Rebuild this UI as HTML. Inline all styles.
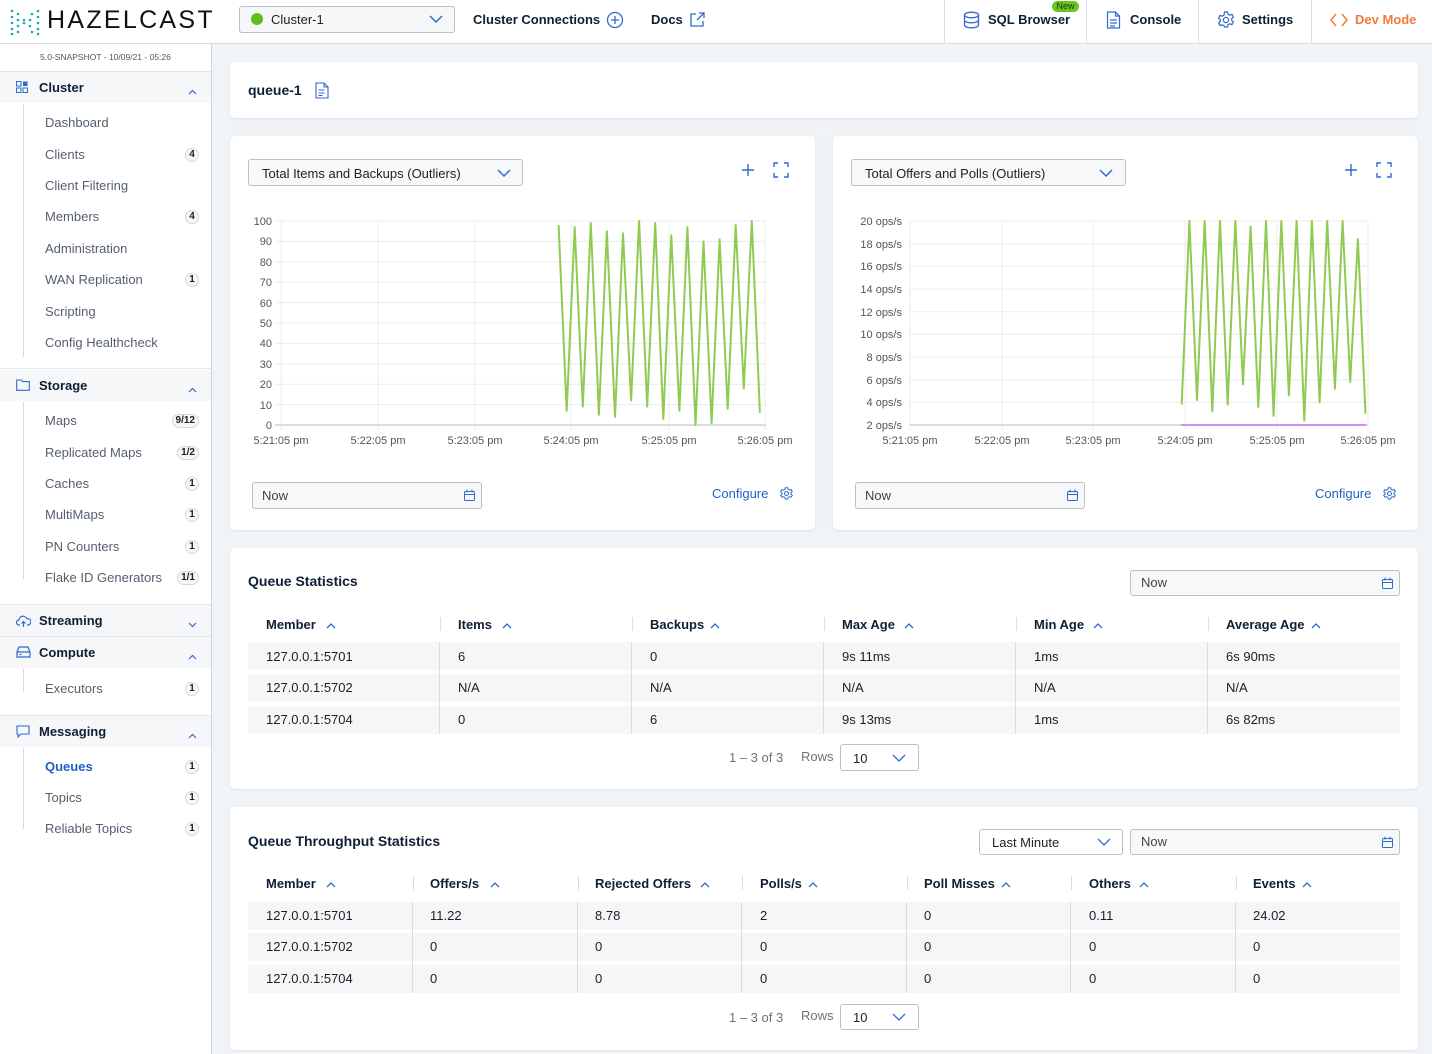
<!DOCTYPE html>
<html><head><meta charset="utf-8">
<style>
*{box-sizing:border-box;margin:0;padding:0}
body{width:1432px;height:1054px;overflow:hidden;background:#f1f4f7;font-family:"Liberation Sans",sans-serif;font-size:13px;color:#0f1f35;position:relative}
.a{position:absolute;white-space:nowrap}
.hdr{left:0;top:0;width:1432px;height:44px;background:#fff;border-bottom:1px solid #d9dde2}
.side{left:0;top:44px;width:212px;height:1010px;background:#fff;border-right:1px solid #cfd4da}
.card{background:#fff;border-radius:5px;box-shadow:0 1px 2px rgba(0,0,0,.08)}
.b{font-weight:bold}
.sec{left:0;width:211px;height:31px;background:#f6f7f9;font-weight:bold;font-size:13px;color:#0f1f35}
.sec span{position:absolute;left:39px;top:8px}
.sec i{position:absolute;left:16px;top:9px}
.sec em{position:absolute;right:14px;top:11px}
.it{left:45px;color:#545f6e;font-size:13px}
.bd{position:absolute;right:0;height:14px;min-width:14px;padding:0 3px;border:1px solid #d4d7db;border-radius:8px;font-size:10px;font-weight:bold;text-align:center;line-height:12px;color:#222;background:#f7f7f7}
.tl{left:23px;width:1px;background:#d6d9dd}
.sel{border:1px solid #b9c0c9;border-radius:3px;background:#f7f8fa;color:#222}
.th{font-weight:bold;color:#0f1f35}
.row{background:#f5f6f7;height:28px}
.td{color:#1b1f24}
.vd{width:1px;background:#d9dde1}
.gray{color:#6a737d}
</style></head><body>

<div class="a hdr"></div>
<svg class="a" style="left:10px;top:8px" width="30" height="28" viewBox="0 0 30 28">
<g fill="#27a5b8">
<circle cx="2" cy="3" r="1.3"/><circle cx="2" cy="9" r="1.3"/><circle cx="2" cy="15" r="1.3"/><circle cx="2" cy="21" r="1.3"/><circle cx="2" cy="26" r="1.3"/>
<circle cx="8" cy="6" r="1.3"/><circle cx="8" cy="12" r="1.3"/><circle cx="8" cy="18" r="1.3"/><circle cx="8" cy="24" r="1.3"/>
<circle cx="14" cy="12" r="1.3"/><circle cx="14" cy="15" r="1.3"/><circle cx="20" cy="12" r="1.3"/><circle cx="20" cy="18" r="1.3"/>
<circle cx="22" cy="6" r="1.3"/><circle cx="22" cy="24" r="1.3"/>
<circle cx="28" cy="3" r="1.3"/><circle cx="28" cy="9" r="1.3"/><circle cx="28" cy="15" r="1.3"/><circle cx="28" cy="21" r="1.3"/><circle cx="28" cy="26" r="1.3"/>
</g></svg>
<div class="a" style="left:47px;top:6px;font-size:25px;letter-spacing:2.3px;color:#111">HAZELCAST</div>
<div class="a sel" style="left:239px;top:6px;width:216px;height:27px;background:#f6f7f9"></div>
<div class="a" style="left:251px;top:13px;width:12px;height:12px;border-radius:6px;background:#5fbf1a"></div>
<div class="a" style="left:271px;top:12px;font-size:13px;color:#222">Cluster-1</div>
<svg class="a" style="left:429px;top:14px" width="14" height="10"><path d="M1 2 L7 8 L13 2" stroke="#2f6ad0" stroke-width="1.5" fill="none"/></svg>
<div class="a b" style="left:473px;top:12px;font-size:13px">Cluster Connections</div>
<svg class="a" style="left:606px;top:11px" width="18" height="18"><circle cx="9" cy="9" r="7.5" stroke="#2f6ad0" stroke-width="1.3" fill="none"/><path d="M9 5v8M5 9h8" stroke="#2f6ad0" stroke-width="1.3"/></svg>
<div class="a b" style="left:651px;top:12px;font-size:13px">Docs</div>
<svg class="a" style="left:689px;top:11px" width="17" height="17"><path d="M7 3H2v12h12v-5M10 2h5v5M15 2L8 9" stroke="#2f6ad0" stroke-width="1.3" fill="none"/></svg>
<div class="a vd" style="left:944px;top:0;height:43px"></div>
<div class="a vd" style="left:1086px;top:0;height:43px"></div>
<div class="a vd" style="left:1198px;top:0;height:43px"></div>
<div class="a vd" style="left:1311px;top:0;height:43px"></div>
<svg class="a" style="left:963px;top:11px" width="17" height="18"><ellipse cx="8.5" cy="4" rx="7" ry="2.8" stroke="#2f6ad0" stroke-width="1.3" fill="none"/><path d="M1.5 4v10c0 1.6 3 2.8 7 2.8s7-1.2 7-2.8V4M1.5 9c0 1.6 3 2.8 7 2.8s7-1.2 7-2.8" stroke="#2f6ad0" stroke-width="1.3" fill="none"/></svg>
<div class="a b" style="left:988px;top:12px;font-size:13px">SQL Browser</div>
<div class="a" style="left:1052px;top:1px;width:27px;height:11px;background:#6cc51d;border-radius:6px;font-size:9px;color:#1d3a10;text-align:center;line-height:11px">New</div>
<svg class="a" style="left:1106px;top:11px" width="15" height="18"><path d="M1.5 1h8l4 4v12h-12z M9.5 1v4h4 M4 9h7M4 12h7M4 15h5" stroke="#2f6ad0" stroke-width="1.2" fill="none"/></svg>
<div class="a b" style="left:1130px;top:12px;font-size:13px">Console</div>
<svg class="a" style="left:1217px;top:11px" width="18" height="18"><circle cx="9" cy="9" r="2.6" stroke="#2f6ad0" stroke-width="1.2" fill="none"/><path d="M7.5 1h3l.5 2.2 1.8 1 2.1-.8 1.5 2.6-1.7 1.5v2l1.7 1.5-1.5 2.6-2.1-.8-1.8 1-.5 2.2h-3L7 14.8l-1.8-1-2.1.8-1.5-2.6L3.3 10.5v-2L1.6 7l1.5-2.6 2.1.8 1.8-1z" stroke="#2f6ad0" stroke-width="1.2" fill="none"/></svg>
<div class="a b" style="left:1242px;top:12px;font-size:13px">Settings</div>
<svg class="a" style="left:1330px;top:13px" width="18" height="14"><path d="M6 1L1 7l5 6M12 1l5 6-5 6" stroke="#f07b3a" stroke-width="1.5" fill="none"/></svg>
<div class="a b" style="left:1355px;top:12px;font-size:13px;color:#f07b3a">Dev Mode</div>

<div class="a side"></div>
<div class="a" style="left:0;top:52px;width:211px;text-align:center;font-size:8.5px;color:#555">5.0-SNAPSHOT - 10/09/21 - 05:26</div>
<div class="a" style="left:0;top:71px;width:211px;height:1px;background:#e2e5e8"></div>

<div class="a sec" style="top:72px"><i><svg width="12" height="12"><rect x="0.5" y="0.5" width="4.5" height="4.5" fill="none" stroke="#2f6ad0"/><rect x="7" y="0.5" width="4.5" height="4.5" fill="#2f6ad0"/><rect x="0.5" y="7" width="4.5" height="4.5" fill="none" stroke="#2f6ad0"/><rect x="7" y="7" width="4.5" height="4.5" fill="none" stroke="#2f6ad0"/></svg></i><span>Cluster</span><em><svg width="9" height="6"><path d="M1 5l3.5-3.5L8 5" stroke="#2f6ad0" fill="none" stroke-width="1.2"/></svg></em></div>
<div class="a tl" style="top:104px;height:253px"></div>
<div class="a it" style="top:115px">Dashboard</div>
<div class="a it" style="top:147px;width:154px">Clients<span class="bd" style="top:1px">4</span></div>
<div class="a it" style="top:178px">Client Filtering</div>
<div class="a it" style="top:209px;width:154px">Members<span class="bd" style="top:1px">4</span></div>
<div class="a it" style="top:241px">Administration</div>
<div class="a it" style="top:272px;width:154px">WAN Replication<span class="bd" style="top:1px">1</span></div>
<div class="a it" style="top:304px">Scripting</div>
<div class="a it" style="top:335px">Config Healthcheck</div>
<div class="a" style="left:0;top:368px;width:211px;height:1px;background:#e2e5e8"></div>

<div class="a sec" style="top:370px"><i><svg width="14" height="12"><path d="M0.7 1h4.5l1.3 1.6h6.8v8.7H0.7z" fill="none" stroke="#2f6ad0" stroke-width="1.1"/></svg></i><span>Storage</span><em><svg width="9" height="6"><path d="M1 5l3.5-3.5L8 5" stroke="#2f6ad0" fill="none" stroke-width="1.2"/></svg></em></div>
<div class="a tl" style="top:402px;height:177px"></div>
<div class="a it" style="top:413px;width:154px">Maps<span class="bd" style="top:1px">9/12</span></div>
<div class="a it" style="top:445px;width:154px">Replicated Maps<span class="bd" style="top:1px">1/2</span></div>
<div class="a it" style="top:476px;width:154px">Caches<span class="bd" style="top:1px">1</span></div>
<div class="a it" style="top:507px;width:154px">MultiMaps<span class="bd" style="top:1px">1</span></div>
<div class="a it" style="top:539px;width:154px">PN Counters<span class="bd" style="top:1px">1</span></div>
<div class="a it" style="top:570px;width:154px">Flake ID Generators<span class="bd" style="top:1px">1/1</span></div>
<div class="a" style="left:0;top:604px;width:211px;height:1px;background:#e2e5e8"></div>

<div class="a sec" style="top:605px"><i><svg width="15" height="14"><path d="M4 11H3a2.5 2.5 0 0 1 0-5 4 4 0 0 1 7.7-1.3A3 3 0 0 1 12.5 11H11M7.5 13V7.5M5.5 9.5l2-2 2 2" fill="none" stroke="#2f6ad0" stroke-width="1.2"/></svg></i><span>Streaming</span><em><svg width="9" height="6"><path d="M1 1l3.5 3.5L8 1" stroke="#2f6ad0" fill="none" stroke-width="1.2"/></svg></em></div>
<div class="a" style="left:0;top:636px;width:211px;height:1px;background:#e2e5e8"></div>
<div class="a sec" style="top:637px"><i><svg width="15" height="12"><path d="M1 6l2-5h9l2 5v5H1z M1 6h13 M3.5 8.5h2" fill="none" stroke="#2f6ad0" stroke-width="1.2"/></svg></i><span>Compute</span><em><svg width="9" height="6"><path d="M1 5l3.5-3.5L8 5" stroke="#2f6ad0" fill="none" stroke-width="1.2"/></svg></em></div>
<div class="a tl" style="top:669px;height:23px"></div>
<div class="a it" style="top:681px;width:154px">Executors<span class="bd" style="top:1px">1</span></div>
<div class="a" style="left:0;top:715px;width:211px;height:1px;background:#e2e5e8"></div>

<div class="a sec" style="top:716px"><i><svg width="14" height="13"><path d="M1 1h12v8H5l-3 3V9H1z" fill="none" stroke="#2f6ad0" stroke-width="1.1"/></svg></i><span>Messaging</span><em><svg width="9" height="6"><path d="M1 5l3.5-3.5L8 5" stroke="#2f6ad0" fill="none" stroke-width="1.2"/></svg></em></div>
<div class="a tl" style="top:748px;height:81px"></div>
<div class="a it b" style="top:759px;width:154px;color:#2160c4">Queues<span class="bd" style="top:1px">1</span></div>
<div class="a it" style="top:790px;width:154px">Topics<span class="bd" style="top:1px">1</span></div>
<div class="a it" style="top:821px;width:154px">Reliable Topics<span class="bd" style="top:1px">1</span></div>

<div class="a card" style="left:230px;top:62px;width:1188px;height:56px"></div>
<div class="a b" style="left:248px;top:82px;font-size:14px">queue-1</div>
<svg class="a" style="left:315px;top:82px" width="14" height="17"><path d="M1 1h8l4 4v11H1z M9 1v4h4 M3.5 8h6M3.5 11h6M3.5 13.5h4" stroke="#2f6ad0" stroke-width="1.1" fill="none"/></svg>

<div class="a card" style="left:230px;top:136px;width:585px;height:394px"></div>
<div class="a card" style="left:833px;top:136px;width:585px;height:394px"></div>

<div class="a sel" style="left:248px;top:159px;width:275px;height:27px"></div>
<div class="a" style="left:262px;top:166px;color:#222">Total Items and Backups (Outliers)</div>
<svg class="a" style="left:497px;top:168px" width="14" height="10"><path d="M1 2L7 8 13 2" stroke="#2f6ad0" stroke-width="1.5" fill="none"/></svg>
<div class="a sel" style="left:851px;top:159px;width:275px;height:27px"></div>
<div class="a" style="left:865px;top:166px;color:#222">Total Offers and Polls (Outliers)</div>
<svg class="a" style="left:1099px;top:168px" width="14" height="10"><path d="M1 2L7 8 13 2" stroke="#2f6ad0" stroke-width="1.5" fill="none"/></svg>

<div class="a sel" style="left:252px;top:482px;width:230px;height:27px;background:#f7f8fa"></div>
<div class="a" style="left:262px;top:488px;color:#444">Now</div>
<div class="a sel" style="left:855px;top:482px;width:230px;height:27px;background:#f7f8fa"></div>
<div class="a" style="left:865px;top:488px;color:#444">Now</div>
<div class="a" style="left:712px;top:486px;color:#2160c4;font-size:13px">Configure</div>
<div class="a" style="left:1315px;top:486px;color:#2160c4;font-size:13px">Configure</div>

<svg class="a" style="left:0;top:0;pointer-events:none" width="1432" height="1054">
<defs>
<g id="cal"><rect x="0.5" y="2.5" width="10" height="9" rx="1" fill="none" stroke="#2f6ad0"/><path d="M0.5 5.5h10M3 0.5v3M8 0.5v3" stroke="#2f6ad0"/></g>
<g id="gear"><circle cx="6.5" cy="6.5" r="2" fill="none" stroke="#2f6ad0"/><path d="M5.3 0.7h2.4l.4 1.6 1.4.8 1.6-.6 1.2 2-1.3 1.1v1.6l1.3 1.1-1.2 2-1.6-.6-1.4.8-.4 1.6H5.3l-.4-1.6-1.4-.8-1.6.6-1.2-2L2 7.3V5.7L.7 4.6l1.2-2 1.6.6 1.4-.8z" fill="none" stroke="#2f6ad0"/></g>
<g id="plus"><path d="M6 0v12M0 6h12" stroke="#2f6ad0" stroke-width="1.4"/></g>
<g id="full"><path d="M0 4V0h4M10 0h4v4M14 10v4h-4M4 14H0v-4" stroke="#2f6ad0" stroke-width="1.4" fill="none"/></g>
</defs>
<use href="#cal" x="464" y="489"/><use href="#cal" x="1067" y="489"/>
<use href="#gear" x="780" y="487"/><use href="#gear" x="1383" y="487"/>
<use href="#plus" x="742" y="164"/><use href="#plus" x="1345" y="164"/>
<use href="#full" x="774" y="163"/><use href="#full" x="1377" y="163"/>

<g stroke="#ececec" stroke-width="1">
<line x1="275" y1="221" x2="766" y2="221"/><line x1="275" y1="241.4" x2="766" y2="241.4"/><line x1="275" y1="261.8" x2="766" y2="261.8"/><line x1="275" y1="282.2" x2="766" y2="282.2"/><line x1="275" y1="302.6" x2="766" y2="302.6"/><line x1="275" y1="323" x2="766" y2="323"/><line x1="275" y1="343.4" x2="766" y2="343.4"/><line x1="275" y1="363.8" x2="766" y2="363.8"/><line x1="275" y1="384.2" x2="766" y2="384.2"/><line x1="275" y1="404.6" x2="766" y2="404.6"/>
<line x1="281" y1="221" x2="281" y2="430"/><line x1="378" y1="221" x2="378" y2="430"/><line x1="475" y1="221" x2="475" y2="430"/><line x1="571" y1="221" x2="571" y2="430"/><line x1="669" y1="221" x2="669" y2="430"/><line x1="765" y1="221" x2="765" y2="430"/>
</g>
<line x1="275" y1="425" x2="766" y2="425" stroke="#bbb"/>
<g font-family="Liberation Sans" font-size="11" fill="#555" text-anchor="end">
<text x="272" y="225">100</text><text x="272" y="245">90</text><text x="272" y="266">80</text><text x="272" y="286">70</text><text x="272" y="307">60</text><text x="272" y="327">50</text><text x="272" y="347">40</text><text x="272" y="368">30</text><text x="272" y="388">20</text><text x="272" y="409">10</text><text x="272" y="429">0</text>
</g>
<g font-family="Liberation Sans" font-size="11" fill="#555" text-anchor="middle">
<text x="281" y="444">5:21:05 pm</text><text x="378" y="444">5:22:05 pm</text><text x="475" y="444">5:23:05 pm</text><text x="571" y="444">5:24:05 pm</text><text x="669" y="444">5:25:05 pm</text><text x="765" y="444">5:26:05 pm</text>
</g>
<polyline fill="none" stroke="#8fcb52" stroke-width="2" stroke-linejoin="round" points="558.6,225.1 566.7,410.7 574.7,227.1 582.8,406.6 590.8,223 598.9,414.8 606.9,231.2 615,416.8 623,233.2 631.1,400.5 639.1,221 647.2,406.6 655.2,223 663.3,418.9 671.3,235.3 679.4,410.7 687.4,227.1 695.5,425 703.5,241.4 711.6,423 719.6,239.4 727.7,408.7 735.7,225.1 743.8,388.3 751.8,221 759.9,412.8"/>

<g stroke="#ececec" stroke-width="1">
<line x1="910" y1="221" x2="1368" y2="221"/><line x1="910" y1="243.7" x2="1368" y2="243.7"/><line x1="910" y1="266.3" x2="1368" y2="266.3"/><line x1="910" y1="289" x2="1368" y2="289"/><line x1="910" y1="311.7" x2="1368" y2="311.7"/><line x1="910" y1="334.3" x2="1368" y2="334.3"/><line x1="910" y1="357" x2="1368" y2="357"/><line x1="910" y1="379.7" x2="1368" y2="379.7"/><line x1="910" y1="402.3" x2="1368" y2="402.3"/>
<line x1="910" y1="221" x2="910" y2="430"/><line x1="1002" y1="221" x2="1002" y2="430"/><line x1="1093" y1="221" x2="1093" y2="430"/><line x1="1185" y1="221" x2="1185" y2="430"/><line x1="1277" y1="221" x2="1277" y2="430"/><line x1="1368" y1="221" x2="1368" y2="430"/>
</g>
<line x1="910" y1="425" x2="1368" y2="425" stroke="#bbb"/>
<g font-family="Liberation Sans" font-size="11" fill="#555" text-anchor="end">
<text x="902" y="225">20 ops/s</text><text x="902" y="248">18 ops/s</text><text x="902" y="270">16 ops/s</text><text x="902" y="293">14 ops/s</text><text x="902" y="316">12 ops/s</text><text x="902" y="338">10 ops/s</text><text x="902" y="361">8 ops/s</text><text x="902" y="384">6 ops/s</text><text x="902" y="406">4 ops/s</text><text x="902" y="429">2 ops/s</text>
</g>
<g font-family="Liberation Sans" font-size="11" fill="#555" text-anchor="middle">
<text x="910" y="444">5:21:05 pm</text><text x="1002" y="444">5:22:05 pm</text><text x="1093" y="444">5:23:05 pm</text><text x="1185" y="444">5:24:05 pm</text><text x="1277" y="444">5:25:05 pm</text><text x="1368" y="444">5:26:05 pm</text>
</g>
<line x1="1181" y1="425" x2="1366" y2="425" stroke="#d68cf2" stroke-width="2"/>
<polyline fill="none" stroke="#8fcb52" stroke-width="2" stroke-linejoin="round" points="1181.7,404.6 1189.4,221 1197,400.1 1204.7,221 1212.3,411.4 1220,221 1227.7,404.6 1235.3,221 1243,384.2 1250.6,226.7 1258.3,406.9 1266,221 1273.6,415.9 1281.3,221 1288.9,395.5 1296.6,221 1304.3,420.5 1311.9,221 1319.6,402.3 1327.2,221 1334.9,388.7 1342.6,221 1350.2,381.9 1357.9,239.1 1365.5,413.7"/>
</svg>

<div class="a card" style="left:230px;top:548px;width:1188px;height:241px"></div>
<div class="a b" style="left:248px;top:573px;font-size:14px">Queue Statistics</div>
<div class="a sel" style="left:1130px;top:570px;width:270px;height:26px;background:#f7f8fa"></div>
<div class="a" style="left:1141px;top:575px;color:#444">Now</div>

<div class="a th" style="left:266px;top:617px">Member</div>
<div class="a th" style="left:458px;top:617px">Items</div>
<div class="a th" style="left:650px;top:617px">Backups</div>
<div class="a th" style="left:842px;top:617px">Max Age</div>
<div class="a th" style="left:1034px;top:617px">Min Age</div>
<div class="a th" style="left:1226px;top:617px">Average Age</div>
<div class="a vd" style="left:440px;top:617px;height:14px"></div><div class="a vd" style="left:632px;top:617px;height:14px"></div><div class="a vd" style="left:824px;top:617px;height:14px"></div><div class="a vd" style="left:1016px;top:617px;height:14px"></div><div class="a vd" style="left:1208px;top:617px;height:14px"></div>

<div class="a row" style="left:248px;top:642px;width:1152px"></div>
<div class="a row" style="left:248px;top:674px;width:1152px"></div>
<div class="a row" style="left:248px;top:706px;width:1152px"></div>
<div class="a vd" style="left:439px;top:642px;height:92px"></div><div class="a vd" style="left:631px;top:642px;height:92px"></div><div class="a vd" style="left:823px;top:642px;height:92px"></div><div class="a vd" style="left:1015px;top:642px;height:92px"></div><div class="a vd" style="left:1207px;top:642px;height:92px"></div>
<div class="a td" style="left:266px;top:649px">127.0.0.1:5701</div><div class="a td" style="left:458px;top:649px">6</div><div class="a td" style="left:650px;top:649px">0</div><div class="a td" style="left:842px;top:649px">9s 11ms</div><div class="a td" style="left:1034px;top:649px">1ms</div><div class="a td" style="left:1226px;top:649px">6s 90ms</div>
<div class="a td" style="left:266px;top:680px">127.0.0.1:5702</div><div class="a td" style="left:458px;top:680px">N/A</div><div class="a td" style="left:650px;top:680px">N/A</div><div class="a td" style="left:842px;top:680px">N/A</div><div class="a td" style="left:1034px;top:680px">N/A</div><div class="a td" style="left:1226px;top:680px">N/A</div>
<div class="a td" style="left:266px;top:712px">127.0.0.1:5704</div><div class="a td" style="left:458px;top:712px">0</div><div class="a td" style="left:650px;top:712px">6</div><div class="a td" style="left:842px;top:712px">9s 13ms</div><div class="a td" style="left:1034px;top:712px">1ms</div><div class="a td" style="left:1226px;top:712px">6s 82ms</div>
<div class="a gray" style="left:729px;top:750px">1 – 3 of 3</div>
<div class="a gray" style="left:801px;top:749px">Rows</div>
<div class="a sel" style="left:840px;top:744px;width:79px;height:27px;background:#fff"></div>
<div class="a" style="left:853px;top:751px;color:#222">10</div>

<div class="a card" style="left:230px;top:807px;width:1188px;height:243px"></div>
<div class="a b" style="left:248px;top:833px;font-size:14px">Queue Throughput Statistics</div>
<div class="a sel" style="left:979px;top:829px;width:144px;height:26px;background:#fff"></div>
<div class="a" style="left:992px;top:835px;color:#222">Last Minute</div>
<div class="a sel" style="left:1130px;top:829px;width:270px;height:26px;background:#f7f8fa"></div>
<div class="a" style="left:1141px;top:834px;color:#444">Now</div>

<div class="a th" style="left:266px;top:876px">Member</div>
<div class="a th" style="left:430px;top:876px">Offers/s</div>
<div class="a th" style="left:595px;top:876px">Rejected Offers</div>
<div class="a th" style="left:760px;top:876px">Polls/s</div>
<div class="a th" style="left:924px;top:876px">Poll Misses</div>
<div class="a th" style="left:1089px;top:876px">Others</div>
<div class="a th" style="left:1253px;top:876px">Events</div>
<div class="a vd" style="left:413px;top:876px;height:14px"></div><div class="a vd" style="left:578px;top:876px;height:14px"></div><div class="a vd" style="left:742px;top:876px;height:14px"></div><div class="a vd" style="left:907px;top:876px;height:14px"></div><div class="a vd" style="left:1071px;top:876px;height:14px"></div><div class="a vd" style="left:1236px;top:876px;height:14px"></div>

<div class="a row" style="left:248px;top:902px;width:1152px"></div>
<div class="a row" style="left:248px;top:933px;width:1152px"></div>
<div class="a row" style="left:248px;top:965px;width:1152px"></div>
<div class="a vd" style="left:412px;top:902px;height:91px"></div><div class="a vd" style="left:577px;top:902px;height:91px"></div><div class="a vd" style="left:741px;top:902px;height:91px"></div><div class="a vd" style="left:906px;top:902px;height:91px"></div><div class="a vd" style="left:1070px;top:902px;height:91px"></div><div class="a vd" style="left:1235px;top:902px;height:91px"></div>
<div class="a td" style="left:266px;top:908px">127.0.0.1:5701</div><div class="a td" style="left:430px;top:908px">11.22</div><div class="a td" style="left:595px;top:908px">8.78</div><div class="a td" style="left:760px;top:908px">2</div><div class="a td" style="left:924px;top:908px">0</div><div class="a td" style="left:1089px;top:908px">0.11</div><div class="a td" style="left:1253px;top:908px">24.02</div>
<div class="a td" style="left:266px;top:939px">127.0.0.1:5702</div><div class="a td" style="left:430px;top:939px">0</div><div class="a td" style="left:595px;top:939px">0</div><div class="a td" style="left:760px;top:939px">0</div><div class="a td" style="left:924px;top:939px">0</div><div class="a td" style="left:1089px;top:939px">0</div><div class="a td" style="left:1253px;top:939px">0</div>
<div class="a td" style="left:266px;top:971px">127.0.0.1:5704</div><div class="a td" style="left:430px;top:971px">0</div><div class="a td" style="left:595px;top:971px">0</div><div class="a td" style="left:760px;top:971px">0</div><div class="a td" style="left:924px;top:971px">0</div><div class="a td" style="left:1089px;top:971px">0</div><div class="a td" style="left:1253px;top:971px">0</div>
<div class="a gray" style="left:729px;top:1010px">1 – 3 of 3</div>
<div class="a gray" style="left:801px;top:1008px">Rows</div>
<div class="a sel" style="left:840px;top:1004px;width:79px;height:26px;background:#fff"></div>
<div class="a" style="left:853px;top:1010px;color:#222">10</div>

<svg class="a" style="left:0;top:0;pointer-events:none" width="1432" height="1054">
<g fill="none" stroke="#2f6ad0" stroke-width="1.3">
<path d="M327 628l4-4 4 4"/><path d="M503 628l4-4 4 4"/><path d="M711 628l4-4 4 4"/><path d="M905 628l4-4 4 4"/><path d="M1094 628l4-4 4 4"/><path d="M1312 628l4-4 4 4"/>
<path d="M327 887l4-4 4 4"/><path d="M491 887l4-4 4 4"/><path d="M701 887l4-4 4 4"/><path d="M809 887l4-4 4 4"/><path d="M1002 887l4-4 4 4"/><path d="M1140 887l4-4 4 4"/><path d="M1303 887l4-4 4 4"/>
<path d="M893 755l6 6 6-6"/><path d="M893 1014l6 6 6-6"/><path d="M1098 839l6 6 6-6"/>
</g>
<g fill="none" stroke="#2f6ad0">
<rect x="1382.5" y="579.5" width="10" height="9" rx="1"/><path d="M1382.5 582.5h10M1385 577.5v3M1390 577.5v3"/>
<rect x="1382.5" y="838.5" width="10" height="9" rx="1"/><path d="M1382.5 841.5h10M1385 836.5v3M1390 836.5v3"/>
</g>
</svg>
</body></html>
